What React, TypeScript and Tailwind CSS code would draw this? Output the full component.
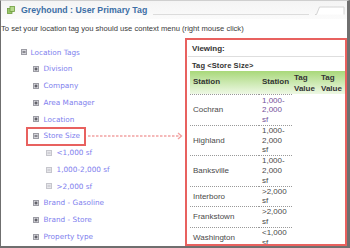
import React from 'react';

type Kind = 'plus' | 'minus' | 'leaf';

const tree: { label: string; level: number; kind: Kind; selected?: boolean }[] = [
  { label: 'Location Tags', level: 0, kind: 'minus' },
  { label: 'Division', level: 1, kind: 'plus' },
  { label: 'Company', level: 1, kind: 'plus' },
  { label: 'Area Manager', level: 1, kind: 'plus' },
  { label: 'Location', level: 1, kind: 'plus' },
  { label: 'Store Size', level: 1, kind: 'minus', selected: true },
  { label: '<1,000 sf', level: 2, kind: 'leaf' },
  { label: '1,000-2,000 sf', level: 2, kind: 'leaf' },
  { label: '>2,000 sf', level: 2, kind: 'leaf' },
  { label: 'Brand - Gasoline', level: 1, kind: 'plus' },
  { label: 'Brand - Store', level: 1, kind: 'plus' },
  { label: 'Property type', level: 1, kind: 'plus' },
];

const rows = [
  { station: 'Cochran', value: '1,000-2,000 sf' },
  { station: 'Highland', value: '1,000-2,000 sf' },
  { station: 'Banksville', value: '1,000-2,000 sf' },
  { station: 'Interboro', value: '>2,000 sf' },
  { station: 'Frankstown', value: '>2,000 sf' },
  { station: 'Washington', value: '<1,000 sf' },
];

const indent = ['pl-[20px]', 'pl-[32px]', 'pl-[45px]'];

function TreeIcon({ kind }: { kind: Kind }) {
  if (kind === 'leaf') {
    return (
      <svg width="6" height="6" viewBox="0 0 6 6" className="shrink-0">
        <rect x="0.5" y="0.5" width="5" height="5" fill="#e6e6ea" stroke="#c6c6cc" />
        <path d="M1.5 3h3" stroke="#bdbdc4" strokeWidth="1" />
      </svg>
    );
  }
  return (
    <svg width="6" height="6" viewBox="0 0 6 6" className="shrink-0">
      <rect x="0.5" y="0.5" width="5" height="5" fill="#d4d4da" stroke="#9c9ca4" />
      <path d="M1.5 3h3" stroke="#3c3c44" strokeWidth="1" />
      {kind === 'plus' ? <path d="M3 1.5v3" stroke="#3c3c44" strokeWidth="1" /> : null}
    </svg>
  );
}

export default function App() {
  return (
    <div
      className="relative w-[350px] h-[248px] bg-white border-t border-t-[#cfcfcf] border-l border-l-[#6f6f6f] border-r-[3px] border-r-[#6f6f6f] border-b-2 border-b-[#6f6f6f] overflow-hidden flex flex-col"
      style={{ fontFamily: '"Liberation Sans", Arial, sans-serif' }}
    >
      {/* title bar */}
      <div className="relative h-[18px] shrink-0 flex items-center pl-[6px] gap-[6px] bg-gradient-to-b from-[#f4f4f4] to-[#fbfbfb]">
        <svg width="8" height="8" viewBox="0 0 8 8" className="shrink-0">
          <rect x="0.5" y="2.5" width="4.5" height="5" fill="#9bc76a" stroke="#6d9c3c" strokeWidth="0.8" />
          <rect x="3" y="0.5" width="4.5" height="5" fill="#b6d98c" stroke="#6d9c3c" strokeWidth="0.8" />
        </svg>
        <span className="text-[8.75px] font-bold text-[#3d6fa6] leading-none">Greyhound : User Primary Tag</span>
        <div className="flex-1 self-end mb-[4px] border-b border-[#dcdcdc]" />
        <svg width="30" height="9" viewBox="0 0 30 9" className="self-end mb-[4px] mr-[2px] shrink-0">
          <path d="M0 8.5h1.5L4.5 1h24.5v7.5" fill="#ffffff" stroke="#d4d4d4" strokeWidth="1" />
        </svg>
      </div>

      <div className="shrink-0 pt-[5px] text-[7.6px] leading-[9px] text-[#3a3a3a] whitespace-nowrap">
        To set your location tag you should use context menu (right mouse click)
      </div>

      <div className="relative flex flex-1 min-h-0">
        {/* tree */}
        <div className="w-[184px] shrink-0 pt-[11px]" style={{ fontFamily: '"DejaVu Sans", Verdana, sans-serif' }}>
          {tree.map((n) => (
            <div key={n.label} className={`h-[16.75px] flex items-center ${indent[n.level]}`}>
              {n.selected ? (
                <span className="-ml-[7px] -my-[1px] h-[19px] pl-[5px] pr-[4px] flex items-center gap-[4.5px] border-2 border-[#e8615f]">
                  <TreeIcon kind={n.kind} />
                  <span className="text-[7.3px] text-[#8080ee] leading-none">{n.label}</span>
                </span>
              ) : (
                <span className={`flex items-center ${n.level === 0 ? 'gap-[3.5px]' : 'gap-[4.5px]'}`}>
                  <TreeIcon kind={n.kind} />
                  <span className="text-[7.3px] text-[#8080ee] leading-none">{n.label}</span>
                </span>
              )}
            </div>
          ))}
        </div>

        {/* viewing panel */}
        <div className="mt-[5px] w-[162px] shrink-0 border-2 border-[#e8615f] overflow-hidden flex flex-col">
          <div className="h-[17px] shrink-0 mx-[1px] flex items-center pl-[4px] pt-[2px] border-b border-[#dedede]">
            <span className="text-[8px] font-bold text-[#333]">Viewing:</span>
          </div>
          <div className="h-[14px] shrink-0 flex items-center pl-[5px] pt-[4px]">
            <span className="text-[7.5px] font-bold text-[#333] tracking-[0.1px]">Tag &lt;Store Size&gt;</span>
          </div>
          <table className="ml-[3px] table-fixed border-collapse text-[8px] leading-[9.8px] text-[#4a4a4a]">
            <colgroup>
              <col className="w-[69px]" />
              <col className="w-[33px]" />
              <col className="w-[27px]" />
              <col className="w-[26px]" />
            </colgroup>
            <thead>
              <tr className="h-[23px] bg-gradient-to-b from-[#a9d879] to-[#eef8e4] text-[#333]">
                <th className="pl-[3px] text-left align-middle font-bold border-b border-dotted border-[#999]">Station</th>
                <th className="pl-[3px] pr-[2px] text-left align-middle font-bold border-b border-dotted border-[#999]">Station</th>
                <th className="pl-[2px] text-left align-middle font-bold leading-[11px]">Tag Value</th>
                <th className="pl-[2px] text-left align-middle font-bold leading-[11px]">Tag Value</th>
              </tr>
            </thead>
            <tbody>
              {rows.map((r, i) => (
                <tr key={r.station}>
                  <td className={`pl-[3px] align-middle border-b border-dotted border-[#999] ${i === 0 ? 'pt-[1px]' : ''}`}>{r.station}</td>
                  <td className={`pl-[3px] pr-[2px] align-middle border-b border-dotted border-[#999] ${i === 0 ? 'pt-[1px] text-[#74519a]' : ''}`}>
                    {r.value}
                  </td>
                  <td />
                  <td />
                </tr>
              ))}
            </tbody>
          </table>
        </div>

        {/* dashed pointer from the selected node to the panel */}
        <svg
          width="98"
          height="8"
          viewBox="0 0 98 8"
          className="absolute left-[87px] top-[99px] pointer-events-none"
        >
          <path d="M0 4h93" stroke="#f2a2a2" strokeWidth="1.6" strokeDasharray="2.5 1.5" />
          <path d="M90 1l3.5 3-3.5 3" fill="none" stroke="#f2a2a2" strokeWidth="1.4" />
        </svg>
      </div>
    </div>
  );
}
